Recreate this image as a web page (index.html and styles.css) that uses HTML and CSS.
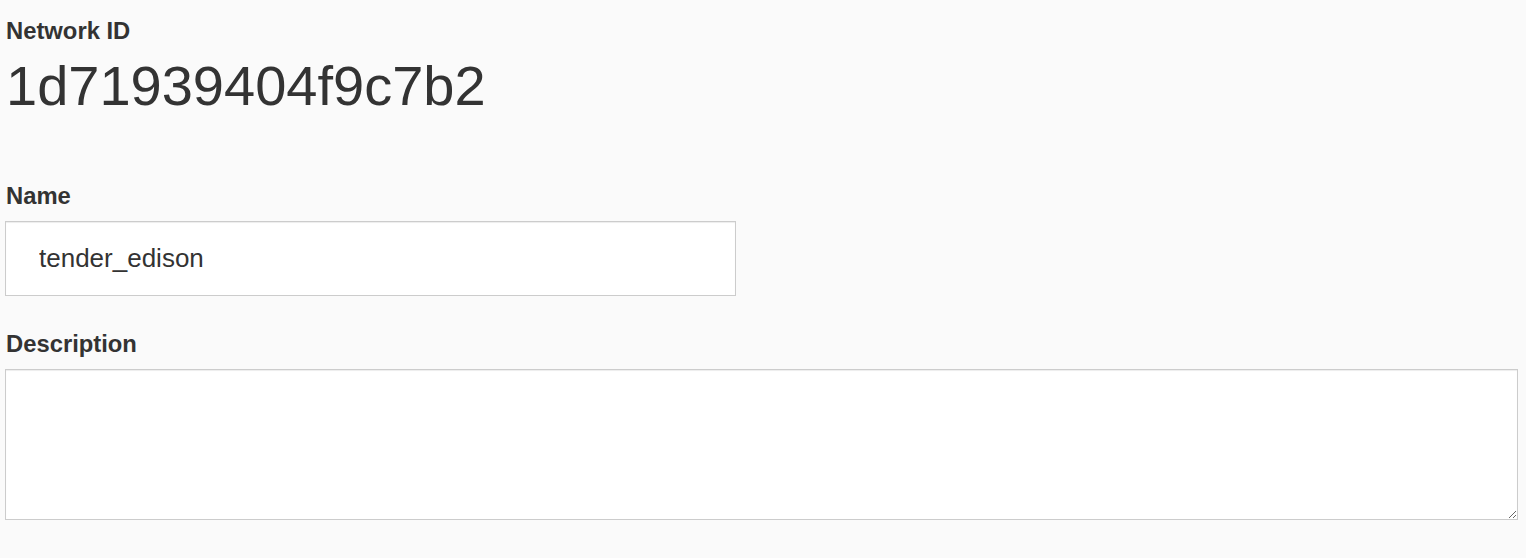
FILE: index.html
```html
<!DOCTYPE html>
<html lang="en">

<head>
  <meta charset="UTF-8">
  <meta name="viewport" content="width=device-width, initial-scale=1.0">
  <title>Network</title>
  <link rel="stylesheet" href="styles.css">
</head>

<body>
  <form class="network" autocomplete="off">
    <div class="network__id">
      <label class="network__label">Network ID</label>
      <div class="network__value">1d71939404f9c7b2</div>
    </div>

    <p class="network__item network__item--name">
      <label class="network__label" for="name">Name</label>
      <input type="text" name="name" id="name" value="tender_edison">
    </p>

    <p class="network__item network__item--desc">
      <label class="network__label" for="description">Description</label>
      <textarea name="description" id="description"></textarea>
    </p>
  </form>
</body>

</html>
```

FILE: styles.css
```css
* {
  box-sizing: border-box;
}

body {
  margin: 0;
  background-color: #fafafa;
  color: #333;
  font-family: "Liberation Sans", Arial, sans-serif;
}

.network {
  padding: 18px 8px 0 5px;
}

.network__label {
  display: block;
  margin: 0 0 12px;
  padding-left: 1px;
  font-size: 23.8px;
  font-weight: bold;
  line-height: 26px;
  color: #333;
}

.network__id .network__label {
  margin-bottom: 10px;
}

.network__value {
  padding-left: 1px;
  font-size: 56px;
  line-height: 64px;
}

.network__item {
  margin: 0;
}

.network__item--name {
  margin-top: 65px;
}

.network__item--desc {
  margin-top: 35px;
}

input[type="text"],
textarea {
  display: block;
  margin: 0;
  border: 1px solid #ccc;
  border-radius: 0;
  outline: none;
  background-color: #fff;
  color: #333;
  font-family: "Liberation Sans", Arial, sans-serif;
  box-shadow: inset 0 1px 1px rgba(0, 0, 0, 0.075);
}

input[type="text"] {
  width: 731px;
  height: 75px;
  padding: 0 33px;
  font-size: 26px;
}

textarea {
  width: 100%;
  height: 151px;
  padding: 8px 12px;
  font-size: 22px;
  resize: vertical;
}
```
